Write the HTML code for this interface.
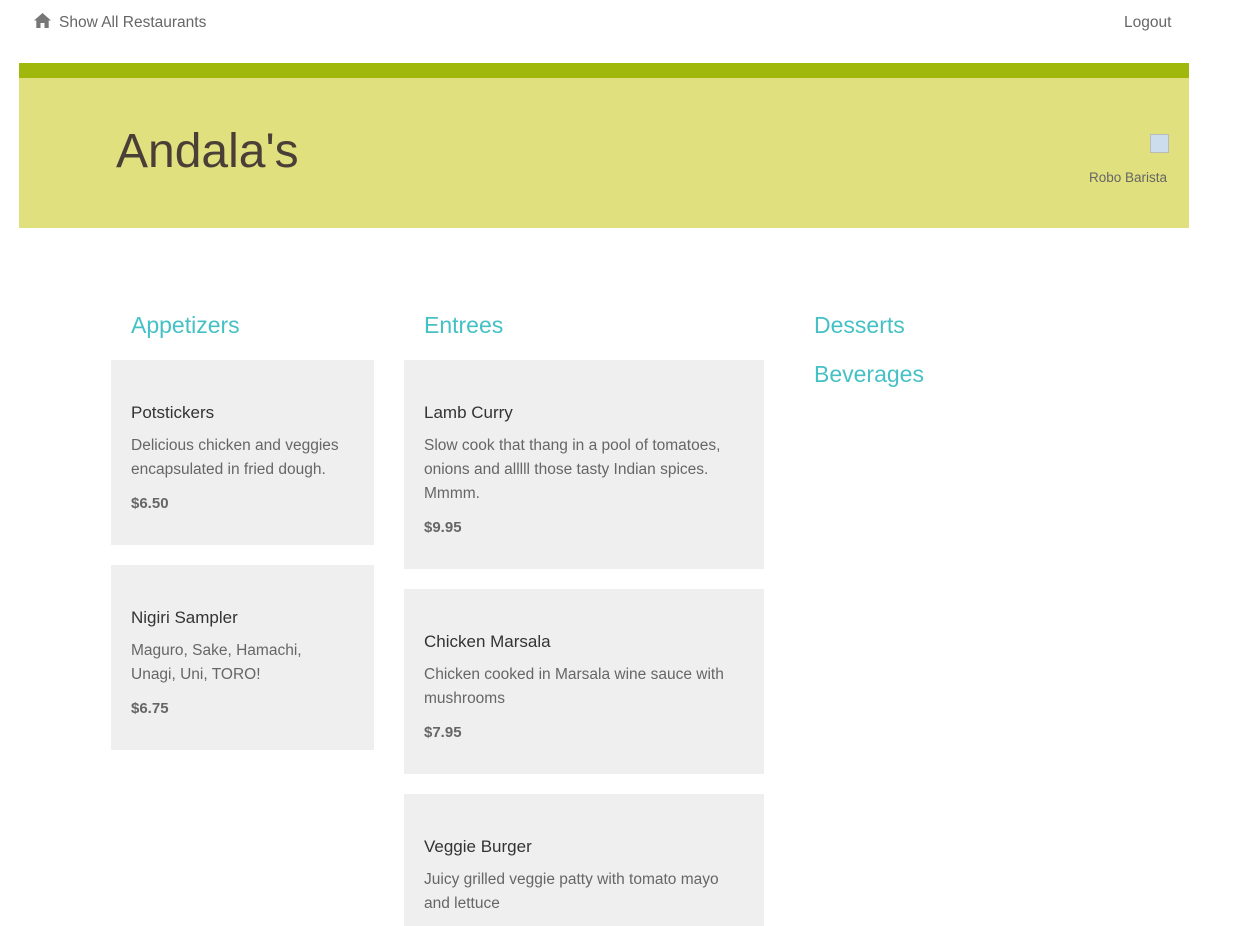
<!DOCTYPE html>
<html><head><style>
body{margin:0;background:#fff;font-family:"Liberation Sans",sans-serif;width:1235px;height:926px;overflow:hidden;position:relative}
.a{position:absolute}
.card{position:absolute;background:#efefef}
.card h4{position:absolute;left:20px;margin:0;font-weight:normal;font-size:17px;color:#333}
.card p{position:absolute;left:20px;margin:0;font-size:15.5px;line-height:24px;color:#666}
.card b{position:absolute;left:20px;font-size:15px;color:#666}
.cat{position:absolute;font-size:23px;color:#45c1c6}
</style></head><body>
<svg class="a" style="left:34px;top:13px" width="17" height="15" viewBox="0 0 17 15"><path d="M8.5 0L0 7.5h2.3V15h4.2v-5h4v5h4.2V7.5H17z" fill="#777"/></svg>
<div class="a" style="left:59px;top:14px;font-size:15.5px;color:#666">Show All Restaurants</div>
<div class="a" style="left:1124px;top:14px;font-size:15.5px;color:#666">Logout</div>
<div class="a" style="left:19px;top:63px;width:1170px;height:15px;background:#a0b80c"></div>
<div class="a" style="left:19px;top:78px;width:1170px;height:150px;background:#e0e07e"></div>
<div class="a" style="left:116px;top:124px;font-size:48px;color:#4a3f37">Andala's</div>
<div class="a" style="left:1150px;top:134px;width:17px;height:17px;border:1px solid #bbb;background:#cde"></div>
<div class="a" style="left:1089px;top:170px;font-size:13.5px;color:#666">Robo Barista</div>
<div class="cat" style="left:131px;top:312px">Appetizers</div>
<div class="cat" style="left:424px;top:312px">Entrees</div>
<div class="cat" style="left:814px;top:312px">Desserts</div>
<div class="cat" style="left:814px;top:361px">Beverages</div>
<div class="card" style="left:111px;top:360px;width:263px;height:185px"><h4 style="top:43px">Potstickers</h4><p style="top:74px;width:225px">Delicious chicken and veggies encapsulated in fried dough.</p><b style="top:135px">$6.50</b></div>
<div class="card" style="left:111px;top:565px;width:263px;height:185px"><h4 style="top:43px">Nigiri Sampler</h4><p style="top:74px;width:190px">Maguro, Sake, Hamachi, Unagi, Uni, TORO!</p><b style="top:135px">$6.75</b></div>
<div class="card" style="left:404px;top:360px;width:360px;height:209px"><h4 style="top:43px">Lamb Curry</h4><p style="top:74px;width:325px">Slow cook that thang in a pool of tomatoes, onions and alllll those tasty Indian spices. Mmmm.</p><b style="top:159px">$9.95</b></div>
<div class="card" style="left:404px;top:589px;width:360px;height:185px"><h4 style="top:43px">Chicken Marsala</h4><p style="top:74px;width:325px">Chicken cooked in Marsala wine sauce with mushrooms</p><b style="top:135px">$7.95</b></div>
<div class="card" style="left:404px;top:794px;width:360px;height:132px"><h4 style="top:43px">Veggie Burger</h4><p style="top:74px;width:315px">Juicy grilled veggie patty with tomato mayo and lettuce</p></div>
</body></html>
